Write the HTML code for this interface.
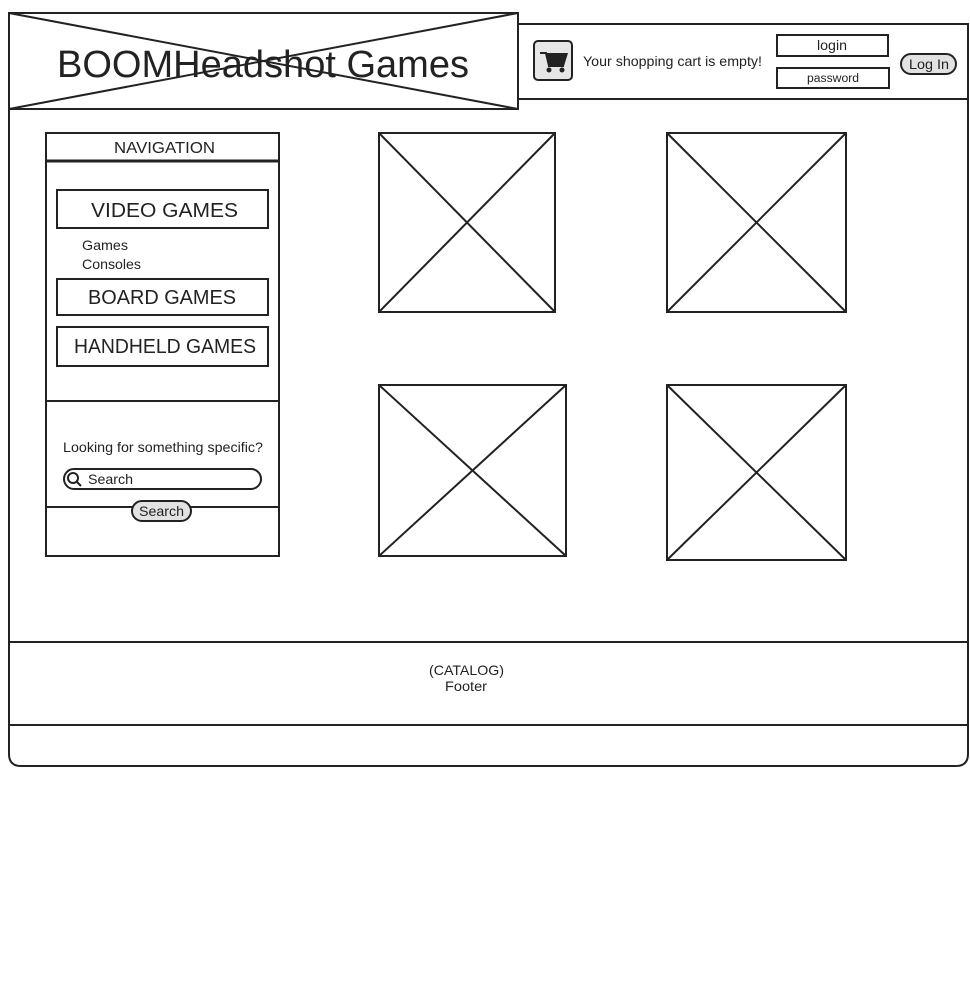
<!DOCTYPE html>
<html><head><meta charset="utf-8"><style>
html,body{margin:0;padding:0;background:#fff;width:970px;height:1000px;overflow:hidden}
svg{display:block}
text{font-family:"Liberation Sans",Arial,Helvetica,sans-serif;fill:#222}
</style></head><body>
<svg width="970" height="1000" viewBox="0 0 970 1000">
<g fill="none" stroke="#222" stroke-width="2">
<path d="M9 13 V754 Q9 766 21 766 H956 Q968 766 968 754 V24 H518"/>
<line x1="518" y1="99" x2="968" y2="99"/>
<rect x="9" y="13" width="509" height="96" fill="#fff"/>
<line x1="9" y1="13" x2="518" y2="109"/><line x1="9" y1="109" x2="518" y2="13"/>
<rect x="534" y="41" width="38" height="39" rx="4" fill="#e6e6e6"/>
<rect x="777" y="35" width="111" height="21"/>
<rect x="777" y="68" width="112" height="20"/>
<rect x="901" y="54" width="55" height="20" rx="10" fill="#e2e2e2"/>
<rect x="46" y="133" width="233" height="423"/>
<line x1="46" y1="161" x2="279" y2="161" stroke-width="3"/>
<rect x="57" y="190" width="211" height="38"/>
<rect x="57" y="279" width="211" height="36"/>
<rect x="57" y="327" width="211" height="39"/>
<line x1="46" y1="401" x2="279" y2="401"/>
<line x1="46" y1="507" x2="279" y2="507"/>
<rect x="64" y="469" width="197" height="20" rx="10"/>
<rect x="132" y="501" width="59" height="20" rx="10" fill="#e2e2e2"/>
<rect x="379" y="133" width="176" height="179"/><path d="M379 133 L555 312 M555 133 L379 312"/>
<rect x="667" y="133" width="179" height="179"/><path d="M667 133 L846 312 M846 133 L667 312"/>
<rect x="379" y="385" width="187" height="171"/><path d="M379 385 L566 556 M566 385 L379 556"/>
<rect x="667" y="385" width="179" height="175"/><path d="M667 385 L846 560 M846 385 L667 560"/>
<line x1="9" y1="642" x2="968" y2="642"/>
<line x1="9" y1="725" x2="968" y2="725"/>
<circle cx="73" cy="478" r="5"/><line x1="77" y1="482" x2="81" y2="486"/>
</g>
<g fill="#222">
<path d="M540 53 H546 L549 66 H564 L568 53 Z"/>
<path d="M540 53 H546 L549 66 H564" fill="none" stroke="#222" stroke-width="2"/>
<circle cx="549" cy="70" r="2.5"/><circle cx="562" cy="70" r="2.5"/>
</g>
<g font-family="Liberation Sans, Arial, sans-serif" lengthAdjust="spacingAndGlyphs">
<text x="57" y="77" font-size="38" textLength="412" lengthAdjust="spacingAndGlyphs">BOOMHeadshot Games</text>
<text x="583" y="66" font-size="14" textLength="179" lengthAdjust="spacingAndGlyphs">Your shopping cart is empty!</text>
<text x="817" y="50" font-size="14" textLength="30" lengthAdjust="spacingAndGlyphs">login</text>
<text x="807" y="82" font-size="11.5" textLength="52" lengthAdjust="spacingAndGlyphs">password</text>
<text x="909" y="69" font-size="14" textLength="40" lengthAdjust="spacingAndGlyphs">Log In</text>
<text x="114" y="153" font-size="16" textLength="101" lengthAdjust="spacingAndGlyphs">NAVIGATION</text>
<text x="91" y="217" font-size="20" textLength="147" lengthAdjust="spacingAndGlyphs">VIDEO GAMES</text>
<text x="82" y="250" font-size="14" textLength="46" lengthAdjust="spacingAndGlyphs">Games</text>
<text x="82" y="269" font-size="14" textLength="59" lengthAdjust="spacingAndGlyphs">Consoles</text>
<text x="88" y="304" font-size="20" textLength="148" lengthAdjust="spacingAndGlyphs">BOARD GAMES</text>
<text x="74" y="353" font-size="20" textLength="182" lengthAdjust="spacingAndGlyphs">HANDHELD GAMES</text>
<text x="63" y="452" font-size="14" textLength="200" lengthAdjust="spacingAndGlyphs">Looking for something specific?</text>
<text x="88" y="484" font-size="14" textLength="45" lengthAdjust="spacingAndGlyphs">Search</text>
<text x="139" y="516" font-size="14" textLength="45" lengthAdjust="spacingAndGlyphs">Search</text>
<text x="429" y="675" font-size="14" textLength="75" lengthAdjust="spacingAndGlyphs">(CATALOG)</text>
<text x="445" y="691" font-size="14" textLength="42" lengthAdjust="spacingAndGlyphs">Footer</text>
</g>
</svg>
</body></html>
